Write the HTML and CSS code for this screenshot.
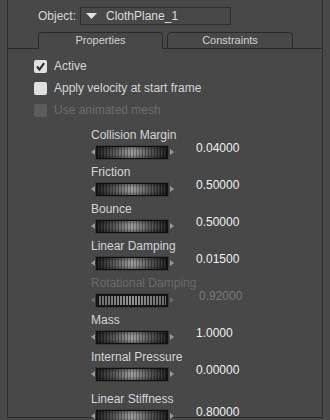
FILE: index.html
```html
<!DOCTYPE html>
<html>
<head>
<meta charset="utf-8">
<link rel="stylesheet" href="styles.css">
</head>
<body>
<div class="frame">
  <div class="header">
    <span class="obj-label">Object:</span>
    <div class="dropdown">
      <svg class="dd-arrow" width="11" height="6" viewBox="0 0 11 6"><polygon points="0,0 11,0 5.5,6" fill="#e2e2e2"/></svg>
      <span>ClothPlane_1</span>
    </div>
  </div>
  <div class="tabs">
    <div class="tab active">Properties</div>
    <div class="tab">Constraints</div>
  </div>
  <div class="pane">
    <label class="check-row"><span class="box checked"><svg width="13" height="13" viewBox="0 0 13 13"><path d="M3 6.5 L5.5 9.5 L10 3.2" fill="none" stroke="#2a2a2a" stroke-width="2"/></svg></span><span>Active</span></label>
    <label class="check-row"><span class="box"></span><span>Apply velocity at start frame</span></label>
    <label class="check-row disabled"><span class="box"></span><span>Use animated mesh</span></label>

    <div class="sliders">
      <div class="group">
        <div class="label">Collision Margin</div>
        <div class="slider-row"><span class="arr-l"></span><span class="bar"></span><span class="arr-r"></span><span class="value">0.04000</span></div>
      </div>
      <div class="group">
        <div class="label">Friction</div>
        <div class="slider-row"><span class="arr-l"></span><span class="bar"></span><span class="arr-r"></span><span class="value">0.50000</span></div>
      </div>
      <div class="group">
        <div class="label">Bounce</div>
        <div class="slider-row"><span class="arr-l"></span><span class="bar"></span><span class="arr-r"></span><span class="value">0.50000</span></div>
      </div>
      <div class="group">
        <div class="label">Linear Damping</div>
        <div class="slider-row"><span class="arr-l"></span><span class="bar"></span><span class="arr-r"></span><span class="value">0.01500</span></div>
      </div>
      <div class="group disabled">
        <div class="label">Rotational Damping</div>
        <div class="slider-row"><span class="arr-l"></span><span class="bar"></span><span class="arr-r"></span><span class="value">0.92000</span></div>
      </div>
      <div class="group">
        <div class="label">Mass</div>
        <div class="slider-row"><span class="arr-l"></span><span class="bar"></span><span class="arr-r"></span><span class="value">1.0000</span></div>
      </div>
      <div class="group">
        <div class="label">Internal Pressure</div>
        <div class="slider-row"><span class="arr-l"></span><span class="bar"></span><span class="arr-r"></span><span class="value">0.00000</span></div>
      </div>
      <div class="group last">
        <div class="label">Linear Stiffness</div>
        <div class="slider-row"><span class="arr-l"></span><span class="bar"></span><span class="arr-r"></span><span class="value">0.80000</span></div>
      </div>
    </div>
  </div>
</div>
</body>
</html>
```
FILE: styles.css
```css
html, body {
  margin: 0;
  padding: 0;
  background: #484848;
  overflow: hidden;
}
body {
  font-family: "Liberation Sans", Arial, sans-serif;
  font-size: 12px;
  color: #d4d6d8;
  width: 330px;
  height: 420px;
}
.frame {
  margin-left: 7px;
  width: 316px;
  height: 418px;
  box-sizing: border-box;
  border-left: 1px solid #2e2e2e;
  border-right: 1px solid #2e2e2e;
  display: flex;
  flex-direction: column;
}
.header {
  display: flex;
  align-items: center;
  height: 18px;
  margin-top: 7px;
  padding-left: 30px;
  gap: 4px;
}
.obj-label {
  line-height: 18px;
}
.dropdown {
  width: 151px;
  height: 18px;
  box-sizing: border-box;
  border: 1px solid #2e2e2e;
  display: flex;
  align-items: center;
  padding-left: 5px;
  gap: 9px;
  color: #dadcde;
}
.dd-arrow {
  display: block;
}
.tabs {
  display: flex;
  gap: 4px;
  margin-top: 7px;
  padding-left: 30px;
  height: 17px;
  margin-bottom: -1px;
}
.tab {
  box-sizing: border-box;
  height: 17px;
  width: 126px;
  border: 1px solid #2a2a2a;
  border-radius: 4px 4px 0 0;
  font-size: 11px;
  line-height: 15px;
  text-align: center;
  color: #d0d3d6;
}
.tab.active {
  width: 125px;
  border-bottom-color: #484848;
  position: relative;
  z-index: 1;
}
.pane {
  border-top: 1px solid #2a2a2a;
  border-bottom: 1px solid #2a2a2a;
  flex: 1;
  min-height: 0;
  padding-top: 6px;
  padding-left: 26px;
}
.check-row {
  display: flex;
  align-items: center;
  height: 22px;
  gap: 7px;
}
.box {
  width: 13px;
  height: 13px;
  border-radius: 2px;
  background: #e0e0e0;
  display: block;
}
.box svg {
  display: block;
}
.check-row.disabled {
  color: #6c6c6c;
}
.check-row.disabled .box {
  background: #5c5c5c;
}
.sliders {
  margin-top: 7px;
  padding-left: 57px;
  display: flex;
  flex-direction: column;
  gap: 6px;
}
.group.last {
  margin-top: 5px;
}
.label {
  line-height: 14px;
  height: 14px;
}
.slider-row {
  display: flex;
  align-items: flex-start;
  margin-top: 4px;
  height: 13px;
}
.arr-l, .arr-r {
  width: 0;
  height: 0;
  margin-top: 3px;
  border-top: 3.5px solid transparent;
  border-bottom: 3.5px solid transparent;
}
.arr-l {
  border-right: 4px solid #9a9a9a;
  margin-right: 1px;
}
.arr-r {
  border-left: 4px solid #9a9a9a;
  margin-left: 2px;
}
.bar {
  width: 72px;
  height: 13px;
  box-sizing: border-box;
  border: 1px solid #111;
  box-shadow: 0 0 0 1px #3a3a3a;
  background:
    repeating-linear-gradient(90deg, rgba(0,0,0,0.28) 0 1px, rgba(255,255,255,0.06) 1px 2px, transparent 2px 3px),
    linear-gradient(180deg, rgba(0,0,0,0.35), rgba(0,0,0,0) 35%, rgba(0,0,0,0) 65%, rgba(0,0,0,0.35)),
    linear-gradient(90deg, #1c1c1c 0%, #545454 25%, #9c9c9c 50%, #545454 75%, #1c1c1c 100%);
}
.value {
  margin-left: 22px;
  margin-top: -5px;
  line-height: 14px;
  color: #f0f0f0;
}
.group.disabled .label {
  color: #6a6a6a;
}
.group.disabled .value {
  color: #787878;
  margin-left: 25px;
}
.group.disabled .arr-l {
  border-right-color: #6a6a6a;
}
.group.disabled .arr-r {
  border-left-color: #6a6a6a;
}
.group.disabled .bar {
  border: 2px solid #141414;
  background:
    repeating-linear-gradient(90deg, #1a1a1a 0 1px, transparent 1px 3px),
    linear-gradient(90deg, #6a6a6a 0%, #959595 50%, #6a6a6a 100%);
}
```
